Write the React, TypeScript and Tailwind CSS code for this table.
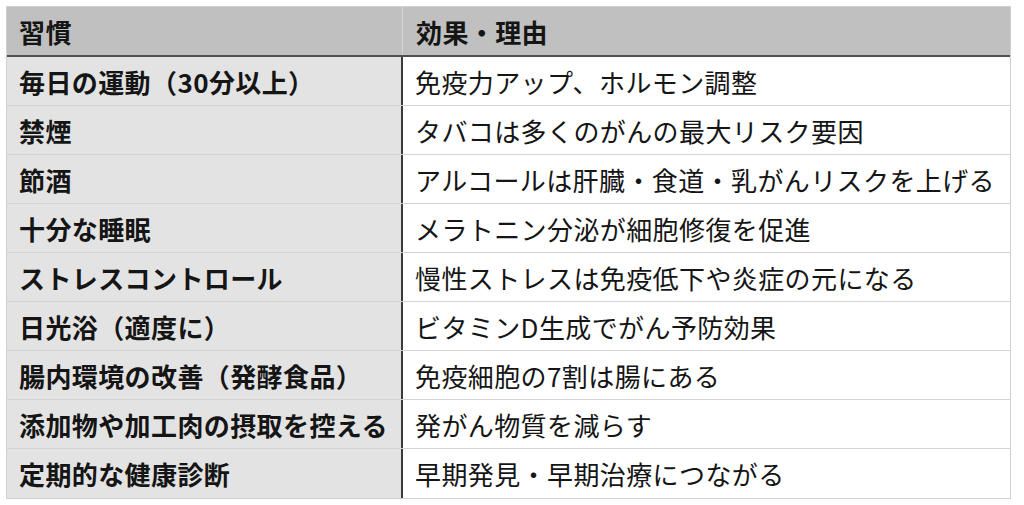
import React from "react";

const rows: [string, string][] = [
    ["毎日の運動（30分以上）", "免疫力アップ、ホルモン調整"],
    ["禁煙", "タバコは多くのがんの最大リスク要因"],
    ["節酒", "アルコールは肝臓・食道・乳がんリスクを上げる"],
    ["十分な睡眠", "メラトニン分泌が細胞修復を促進"],
    ["ストレスコントロール", "慢性ストレスは免疫低下や炎症の元になる"],
    ["日光浴（適度に）", "ビタミンD生成でがん予防効果"],
    ["腸内環境の改善（発酵食品）", "免疫細胞の7割は腸にある"],
    ["添加物や加工肉の摂取を控える", "発がん物質を減らす"],
    ["定期的な健康診断", "早期発見・早期治療につながる"],
];

export default function App() {
    return (
        <div
            className="w-[1024px] h-[505px] bg-white pt-[6px] pl-[6px]"
            style={{ fontFamily: '"Noto Sans CJK JP", "Noto Sans", sans-serif' }}
        >
            <div className="w-[1005px] border border-[#d0d0d0] text-[26px] tracking-[0.4px] text-[#151515]">
                {/* Header */}
                <div className="flex h-[50px] bg-[#c0c0c0] border-b-2 border-[#505050] font-bold">
                    <div className="w-[396px] flex items-center pl-[12px] border-r border-[#d6d6d6]">習慣</div>
                    <div className="flex-1 flex items-center pl-[13px]">効果・理由</div>
                </div>

                {/* Body */}
                {rows.map(([habit, reason], i) => (
                    <div
                        key={i}
                        className={`flex h-[49px] ${i < rows.length - 1 ? "border-b border-[#d4d4d4]" : ""}`}
                    >
                        <div className="w-[396px] flex items-center pl-[12px] bg-[#e3e3e3] font-bold border-r-2 border-[#3a3a3a] whitespace-nowrap">
                            {habit}
                        </div>
                        <div className="flex-1 flex items-center pl-[12px] bg-white whitespace-nowrap">{reason}</div>
                    </div>
                ))}
            </div>
        </div>
    );
}
